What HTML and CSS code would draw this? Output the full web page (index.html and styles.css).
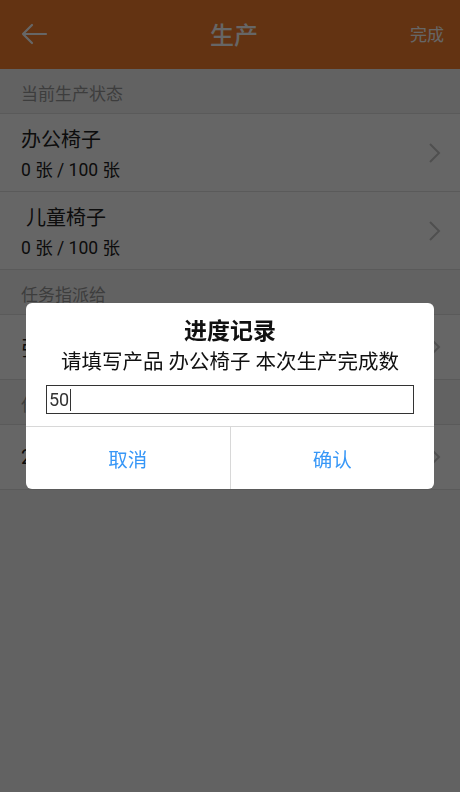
FILE: index.html
```html
<!DOCTYPE html>
<html lang="zh-CN">
<head>
  <meta charset="UTF-8">
  <meta name="viewport" content="width=device-width, initial-scale=1.0">
  <title>生产</title>
  <link rel="stylesheet" href="styles.css">
</head>
<body>

  <!-- Header -->
  <div class="header">
    <div class="side">
      <svg class="back" width="28" height="22" viewBox="0 0 28 22">
        <path d="M12 2 L3 11 L12 20 M3 11 L26 11" fill="none" stroke="#fff" stroke-width="2.2" stroke-linecap="round" stroke-linejoin="round"/>
      </svg>
    </div>
    <div class="title">生产</div>
    <div class="side side-right">完成</div>
  </div>

  <!-- Current status -->
  <div class="section">当前生产状态</div>
  <div class="row">
    <div class="row-text">
      <div class="row-title">办公椅子</div>
      <div class="row-sub">0 张 / 100 张</div>
    </div>
    <svg class="chevron" width="14" height="22" viewBox="0 0 14 22"><path d="M2 2 L11 11 L2 20" fill="none" stroke="#c6c6c6" stroke-width="2"/></svg>
  </div>
  <div class="row">
    <div class="row-text">
      <div class="row-title">&nbsp;儿童椅子</div>
      <div class="row-sub">0 张 / 100 张</div>
    </div>
    <svg class="chevron" width="14" height="22" viewBox="0 0 14 22"><path d="M2 2 L11 11 L2 20" fill="none" stroke="#c6c6c6" stroke-width="2"/></svg>
  </div>

  <!-- Assignment -->
  <div class="section">任务指派给</div>
  <div class="row row-small">
    <div class="row-title">张师傅</div>
    <svg class="chevron" width="14" height="22" viewBox="0 0 14 22"><path d="M2 2 L11 11 L2 20" fill="none" stroke="#c6c6c6" stroke-width="2"/></svg>
  </div>
  <div class="section">任务截止日期</div>
  <div class="row row-small">
    <div class="row-title">2016-05-20</div>
    <svg class="chevron" width="14" height="22" viewBox="0 0 14 22"><path d="M2 2 L11 11 L2 20" fill="none" stroke="#c6c6c6" stroke-width="2"/></svg>
  </div>

  <!-- Dim layer + dialog -->
  <div class="mask">
    <div class="dialog">
      <div class="dialog-body">
        <div class="dialog-title">进度记录</div>
        <div class="dialog-msg">请填写产品 办公椅子 本次生产完成数</div>
        <div class="dialog-input">50<span class="caret"></span></div>
      </div>
      <div class="dialog-buttons">
        <div class="btn">取消</div>
        <div class="btn">确认</div>
      </div>
    </div>
  </div>

</body>
</html>
```

FILE: styles.css
```css
body {
  margin: 0;
  padding: 0;
  height: 792px;
  overflow: hidden;
  background-color: #f5f5f5;
  font-family: Roboto, "Noto Sans CJK SC", sans-serif;
  color: #222;
}

/* Header */
.header {
  height: 69px;
  background-color: #f7802d;
  display: flex;
  align-items: center;
  padding: 0 16px 0 20px;
  color: #fff;
}

.header .side {
  width: 70px;
  display: flex;
  align-items: center;
}

.header .side-right {
  justify-content: flex-end;
  font-size: 17px;
  margin-top: -2px;
}

.header .back {
  margin-top: -2px;
}

.header .title {
  flex: 1;
  text-align: center;
  font-size: 24px;
  font-weight: 500;
  margin-top: -2px;
  margin-left: 4px;
}

/* Section headers */
.section {
  height: 45px;
  box-sizing: border-box;
  padding: 11px 0 0 21px;
  font-size: 17px;
  color: #9a9a9a;
  border-bottom: 1px solid #e2e2e2;
}

/* Rows */
.row {
  height: 78px;
  box-sizing: border-box;
  background-color: #fff;
  border-bottom: 1px solid #e2e2e2;
  display: flex;
  align-items: center;
  justify-content: space-between;
  padding: 0 18px 0 21px;
}

.row-small {
  height: 65px;
}

.row-title {
  font-size: 20px;
  color: #222;
}

.row-sub {
  font-size: 17.5px;
  color: #222;
  margin-top: 3px;
}

.row-text {
  margin-top: 0;
}

/* Dim layer */
.mask {
  position: fixed;
  left: 0;
  top: 0;
  right: 0;
  bottom: 0;
  background-color: rgba(0, 0, 0, 0.6);
  display: flex;
  justify-content: center;
  padding-top: 303px;
  box-sizing: border-box;
}

/* Dialog */
.dialog {
  width: 408px;
  height: 186px;
  background-color: #fff;
  border-radius: 6px;
  display: flex;
  flex-direction: column;
  overflow: hidden;
}

.dialog-body {
  flex: 1;
  display: flex;
  flex-direction: column;
  align-items: center;
  padding-top: 14px;
  border-bottom: 1px solid #d8d8d8;
}

.dialog-title {
  font-size: 23px;
  font-weight: bold;
  color: #111;
  line-height: 30px;
}

.dialog-msg {
  font-size: 20.5px;
  color: #111;
  line-height: 30px;
}

.dialog-input {
  width: 368px;
  height: 29px;
  box-sizing: border-box;
  margin-top: 8px;
  border: 1px solid #333;
  font-size: 18px;
  line-height: 27px;
  padding-left: 2px;
  color: #333;
  display: flex;
  align-items: center;
}

.caret {
  display: inline-block;
  width: 1px;
  height: 22px;
  background-color: #333;
  margin-left: 1px;
}

.dialog-buttons {
  height: 62px;
  display: flex;
}

.btn {
  flex: 1;
  display: flex;
  align-items: center;
  justify-content: center;
  font-size: 19.5px;
  color: #3797f7;
}

.btn + .btn {
  border-left: 1px solid #d8d8d8;
}
```
